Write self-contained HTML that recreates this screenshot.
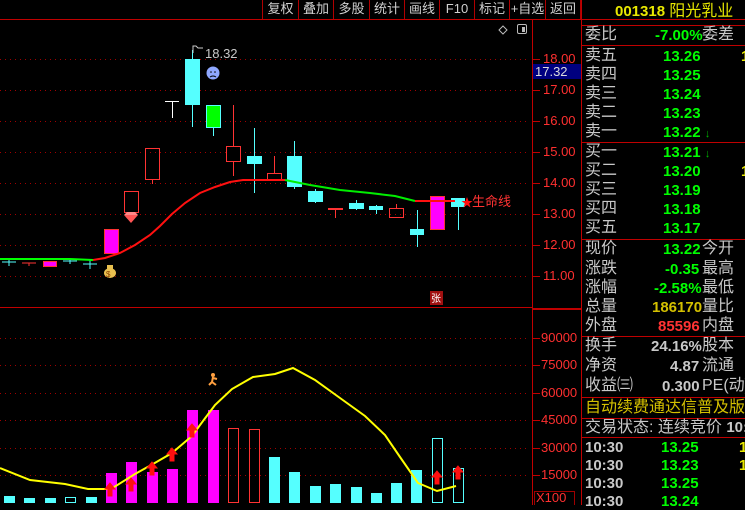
<!DOCTYPE html>
<html><head><meta charset="utf-8">
<style>
*{margin:0;padding:0;box-sizing:border-box}
body{width:745px;height:505px;background:#000;overflow:hidden;position:relative;font-family:"Liberation Sans","Noto Sans CJK SC",sans-serif}
.t{position:absolute;white-space:nowrap;font-size:16px;line-height:17px}
.n{font-size:15px;font-weight:bold}
.w{color:#c8c8c8}.g{color:#00ff00}.y{color:#e8e800}.r{color:#ff3333}.yd{color:#d4c000}
.btn{position:absolute;top:0;height:19px;border-left:1px solid #b00000;color:#d0d0d0;font-size:13px;line-height:18px;text-align:center}
.ax{position:absolute;color:#ff3030;font-size:13px;font-family:"Liberation Sans",sans-serif}
</style></head><body>
<svg width="745" height="505" style="position:absolute;left:0;top:0">
<g stroke="#a00000" stroke-width="1" stroke-dasharray="1,4">
<line x1="0" y1="59.5" x2="530" y2="59.5"/><line x1="0" y1="90.5" x2="530" y2="90.5"/><line x1="0" y1="121.5" x2="530" y2="121.5"/><line x1="0" y1="152.5" x2="530" y2="152.5"/><line x1="0" y1="183.5" x2="530" y2="183.5"/><line x1="0" y1="214.5" x2="530" y2="214.5"/><line x1="0" y1="245.5" x2="530" y2="245.5"/><line x1="0" y1="276.5" x2="530" y2="276.5"/>
<line x1="0" y1="338.5" x2="530" y2="338.5"/><line x1="0" y1="365.5" x2="530" y2="365.5"/><line x1="0" y1="393.5" x2="530" y2="393.5"/><line x1="0" y1="420.5" x2="530" y2="420.5"/><line x1="0" y1="448.5" x2="530" y2="448.5"/><line x1="0" y1="475.5" x2="530" y2="475.5"/>
</g>
<g stroke="#c00000" stroke-width="1">
<line x1="0" y1="19.5" x2="745" y2="19.5"/>
<line x1="532.5" y1="19" x2="532.5" y2="505"/>
<line x1="581.5" y1="0" x2="581.5" y2="505"/>
<line x1="0" y1="307.5" x2="533" y2="307.5"/>
<line x1="533" y1="309" x2="581" y2="309" stroke-width="2"/>
<line x1="582" y1="25.5" x2="745" y2="25.5"/><line x1="582" y1="45.5" x2="745" y2="45.5"/><line x1="582" y1="142.5" x2="745" y2="142.5"/><line x1="582" y1="239.5" x2="745" y2="239.5"/><line x1="582" y1="336.5" x2="745" y2="336.5"/><line x1="582" y1="397.5" x2="745" y2="397.5"/><line x1="582" y1="418.5" x2="745" y2="418.5"/><line x1="582" y1="437.5" x2="745" y2="437.5"/>
<line x1="533" y1="59.5" x2="540" y2="59.5"/><line x1="533" y1="90.5" x2="540" y2="90.5"/><line x1="533" y1="121.5" x2="540" y2="121.5"/><line x1="533" y1="152.5" x2="540" y2="152.5"/><line x1="533" y1="183.5" x2="540" y2="183.5"/><line x1="533" y1="214.5" x2="540" y2="214.5"/><line x1="533" y1="245.5" x2="540" y2="245.5"/><line x1="533" y1="276.5" x2="540" y2="276.5"/>
<line x1="533" y1="338.5" x2="540" y2="338.5"/><line x1="533" y1="365.5" x2="540" y2="365.5"/><line x1="533" y1="393.5" x2="540" y2="393.5"/><line x1="533" y1="420.5" x2="540" y2="420.5"/><line x1="533" y1="448.5" x2="540" y2="448.5"/><line x1="533" y1="475.5" x2="540" y2="475.5"/>
</g>
<rect x="533" y="64" width="48" height="15" fill="#000080"/>
<g stroke-width="1">
<line x1="2" y1="262" x2="16" y2="262" stroke="#55ffff"/><line x1="9" y1="259" x2="9" y2="266" stroke="#55ffff"/>
<line x1="22" y1="263" x2="36" y2="263" stroke="#ff3333"/><line x1="29" y1="263" x2="29" y2="266" stroke="#ff3333"/>
<rect x="43.5" y="261.5" width="13" height="5" fill="#ff00ff" stroke="#ff3333"/>
<line x1="63" y1="261" x2="77" y2="261" stroke="#55ffff"/><line x1="70" y1="260" x2="70" y2="264" stroke="#55ffff"/>
<line x1="83" y1="264" x2="97" y2="264" stroke="#55ffff"/><line x1="90" y1="260" x2="90" y2="269" stroke="#55ffff"/>
<rect x="104.5" y="229.5" width="14" height="24" fill="#ff00ff" stroke="#ff3333"/>
<rect x="124.5" y="191.5" width="14" height="21" fill="none" stroke="#ff3333"/>
<rect x="145.5" y="148.5" width="14" height="31" fill="none" stroke="#ff3333"/><line x1="152.5" y1="179" x2="152.5" y2="184" stroke="#ff3333"/>
<line x1="165" y1="101.5" x2="179" y2="101.5" stroke="#fff"/><line x1="172.5" y1="101" x2="172.5" y2="118" stroke="#fff"/>
<line x1="192.5" y1="50" x2="192.5" y2="127" stroke="#55ffff"/><rect x="185" y="59" width="15" height="46" fill="#55ffff"/>
<line x1="213.5" y1="105" x2="213.5" y2="136" stroke="#55ffff"/><rect x="206.5" y="105.5" width="14" height="22" fill="#00ff00" stroke="#55ffff"/>
<line x1="233.5" y1="105" x2="233.5" y2="176" stroke="#ff3333"/><rect x="226.5" y="146.5" width="14" height="15" fill="#000" stroke="#ff3333"/>
<line x1="254.5" y1="128" x2="254.5" y2="193" stroke="#55ffff"/><rect x="247" y="156" width="15" height="8" fill="#55ffff"/>
<line x1="274.5" y1="156" x2="274.5" y2="173" stroke="#ff3333"/><rect x="267.5" y="173.5" width="14" height="7" fill="none" stroke="#ff3333"/>
<line x1="294.5" y1="141" x2="294.5" y2="189" stroke="#55ffff"/><rect x="287" y="156" width="15" height="31" fill="#55ffff"/>
<line x1="315.5" y1="189" x2="315.5" y2="203" stroke="#55ffff"/><rect x="308" y="191" width="15" height="11" fill="#55ffff"/>
<line x1="328" y1="209" x2="343" y2="209" stroke="#ff3333" stroke-width="2"/><line x1="335.5" y1="208" x2="335.5" y2="218" stroke="#ff3333"/>
<line x1="356.5" y1="200" x2="356.5" y2="210" stroke="#55ffff"/><rect x="349" y="203" width="15" height="6" fill="#55ffff"/>
<line x1="376.5" y1="205" x2="376.5" y2="214" stroke="#55ffff"/><rect x="369" y="206" width="14" height="4" fill="#55ffff"/>
<line x1="396.5" y1="204" x2="396.5" y2="208" stroke="#ff3333"/><rect x="389.5" y="208.5" width="14" height="9" fill="none" stroke="#ff3333"/>
<line x1="417.5" y1="210" x2="417.5" y2="247" stroke="#55ffff"/><rect x="410" y="229" width="14" height="6" fill="#55ffff"/>
<rect x="430.5" y="196.5" width="14" height="33" fill="#ff00ff" stroke="#ff3333"/>
<line x1="458.5" y1="198" x2="458.5" y2="230" stroke="#55ffff"/><rect x="451" y="198" width="14" height="9" fill="#55ffff"/>
</g>
<polyline points="0,259 30,259 70,259 93,260" fill="none" stroke="#00ff00" stroke-width="2"/>
<polyline points="93,260 105,258 120,253 135,245 150,235 160,226 172,214 185,203 200,193 215,187 230,182 243,180 285,180" fill="none" stroke="#ff1010" stroke-width="2"/>
<polyline points="285,180 310,185 340,190 370,193 395,196 415,201" fill="none" stroke="#00ee00" stroke-width="2"/>
<polyline points="415,201 455,201" fill="none" stroke="#ff1010" stroke-width="2"/>
<g fill="#55ffff">
<rect x="4" y="496" width="11" height="7"/><rect x="24" y="498" width="11" height="5"/><rect x="45" y="498" width="11" height="5"/><rect x="86" y="497" width="11" height="6"/>
<rect x="269" y="457" width="11" height="46"/><rect x="289" y="472" width="11" height="31"/><rect x="310" y="486" width="11" height="17"/><rect x="330" y="484" width="11" height="19"/>
<rect x="351" y="487" width="11" height="16"/><rect x="371" y="493" width="11" height="10"/><rect x="391" y="483" width="11" height="20"/><rect x="411" y="470" width="11" height="33"/>
</g>
<rect x="65.5" y="497.5" width="10" height="5" fill="none" stroke="#55ffff"/>
<rect x="432.5" y="438.5" width="10" height="64" fill="none" stroke="#55ffff"/>
<rect x="453.5" y="468.5" width="10" height="34" fill="none" stroke="#55ffff"/>
<g fill="#ff00ff">
<rect x="106" y="473" width="11" height="30"/><rect x="126" y="462" width="11" height="41"/><rect x="147" y="472" width="11" height="31"/><rect x="167" y="469" width="11" height="34"/><rect x="187" y="410" width="11" height="93"/><rect x="208" y="410" width="11" height="93"/>
</g>
<rect x="228.5" y="428.5" width="10" height="74" fill="none" stroke="#ff3333"/>
<rect x="249.5" y="429.5" width="10" height="73" fill="none" stroke="#ff3333"/>
<polyline points="0,468 30,480 65,484 88,489 111,489 135,474 153,464 172,453 192,436 203,421 215,405 232,389 253,377 275,374 293,368 315,380 340,398 365,416 385,435 400,457 418,483 437,491 456,486" fill="none" stroke="#ffff00" stroke-width="2"/>
<g fill="#ff1010" stroke="#ff1010">
<path d="M110,483 l-5,6 h3 v7 h4 v-7 h3z"/><path d="M131,478 l-5,6 h3 v7 h4 v-7 h3z"/><path d="M152,462 l-5,6 h3 v7 h4 v-7 h3z"/><path d="M172,448 l-5,6 h3 v7 h4 v-7 h3z"/><path d="M192,424 l-5,6 h3 v7 h4 v-7 h3z"/><path d="M437,471 l-5,6 h3 v7 h4 v-7 h3z"/><path d="M458,466 l-5,6 h3 v7 h4 v-7 h3z"/>
</g>
<circle cx="213" cy="73" r="6.5" fill="#8fa8ff"/><circle cx="211" cy="72" r="0.8" fill="#000"/><circle cx="215" cy="72" r="0.8" fill="#000"/><path d="M210,77 q3,-2 6,0" stroke="#000" fill="none"/>
<path d="M193,53 v-7 h3 l2,2 h5" stroke="#ccc" fill="none"/>
<path d="M124,215 h14 l-7,8z" fill="#ff5555"/><path d="M124,215 l3,-3 h8 l3,3" fill="#ff8888"/>
<ellipse cx="110" cy="273" rx="6" ry="5" fill="#e8c050"/><rect x="107" y="265" width="6" height="4" fill="#e8c050"/><text x="106" y="277" font-size="8" fill="#8a4000" font-family="Liberation Sans">$</text>
<circle cx="213" cy="375" r="2" fill="#ffa040"/><path d="M213,377 l-1,5 l-3,3 M212,382 l4,3 M213,378 l4,1" stroke="#ffa040" stroke-width="2" fill="none"/>
<rect x="430" y="291" width="13" height="14" fill="#a01010"/>
<path d="M467,197 l1.5,4 h4 l-3.3,2.5 1.3,4 -3.5,-2.5 -3.5,2.5 1.3,-4 -3.3,-2.5 h4z" fill="#ff1010"/>
<path d="M503,26 l4,4 -4,4 -4,-4z" fill="none" stroke="#bbb"/>
<rect x="517.5" y="24.5" width="9" height="9" rx="1.5" fill="none" stroke="#bbb"/><rect x="522" y="27" width="3" height="5" fill="#bbb"/>
<rect x="534.5" y="491.5" width="40" height="14" fill="none" stroke="#a00000"/>
</svg>
<div class="btn" style="left:262px;width:36px">复权</div>
<div class="btn" style="left:298px;width:35px">叠加</div>
<div class="btn" style="left:333px;width:36px">多股</div>
<div class="btn" style="left:369px;width:35px">统计</div>
<div class="btn" style="left:404px;width:35px">画线</div>
<div class="btn" style="left:439px;width:35px">F10</div>
<div class="btn" style="left:474px;width:35px">标记</div>
<div class="btn" style="left:509px;width:36px">+自选</div>
<div class="btn" style="left:545px;width:36px;border-right:1px solid #b00000">返回</div>
<div class="t w" style="left:205px;top:45px;font-size:13px">18.32</div>
<div class="t r" style="left:472px;top:193px;font-size:13px">生命线</div>
<div class="t w" style="left:431px;top:291px;font-size:10px;color:#fff">张</div>
<div class="ax" style="left:543px;top:51px">18.00</div>
<div class="ax" style="left:535px;top:64px;color:#ddd">17.32</div>
<div class="ax" style="left:543px;top:82px">17.00</div>
<div class="ax" style="left:543px;top:113px">16.00</div>
<div class="ax" style="left:543px;top:144px">15.00</div>
<div class="ax" style="left:543px;top:175px">14.00</div>
<div class="ax" style="left:543px;top:206px">13.00</div>
<div class="ax" style="left:543px;top:237px">12.00</div>
<div class="ax" style="left:543px;top:268px">11.00</div>
<div class="ax" style="left:541px;top:330px">90000</div>
<div class="ax" style="left:541px;top:357px">75000</div>
<div class="ax" style="left:541px;top:385px">60000</div>
<div class="ax" style="left:541px;top:412px">45000</div>
<div class="ax" style="left:541px;top:440px">30000</div>
<div class="ax" style="left:541px;top:467px">15000</div>
<div class="ax" style="left:536px;top:490px">X100</div>
<div class="t y" style="left:615px;top:3px;font-weight:bold;font-size:15px">001318 <span style="font-weight:normal;font-size:16px">阳光乳业</span></div>
<div class="t w" style="left:585px;top:26px">委比</div><div class="t g n" style="left:655px;top:27px">-7.00%</div><div class="t w" style="left:702px;top:26px">委差</div>
<div class="t w" style="left:585px;top:47px">卖五</div><div class="t g n" style="left:663px;top:48px">13.26</div><div class="t y n" style="left:741px;top:48px">1</div>
<div class="t w" style="left:585px;top:66px">卖四</div><div class="t g n" style="left:663px;top:67px">13.25</div>
<div class="t w" style="left:585px;top:85px">卖三</div><div class="t g n" style="left:663px;top:86px">13.24</div>
<div class="t w" style="left:585px;top:104px">卖二</div><div class="t g n" style="left:663px;top:105px">13.23</div>
<div class="t w" style="left:585px;top:123px">卖一</div><div class="t g n" style="left:663px;top:124px">13.22 <span style="font-size:11px;color:#00b000">↓</span></div>
<div class="t w" style="left:585px;top:143px">买一</div><div class="t g n" style="left:663px;top:144px">13.21 <span style="font-size:11px;color:#00b000">↓</span></div>
<div class="t w" style="left:585px;top:162px">买二</div><div class="t g n" style="left:663px;top:163px">13.20</div><div class="t y n" style="left:741px;top:163px">1</div>
<div class="t w" style="left:585px;top:181px">买三</div><div class="t g n" style="left:663px;top:182px">13.19</div>
<div class="t w" style="left:585px;top:200px">买四</div><div class="t g n" style="left:663px;top:201px">13.18</div>
<div class="t w" style="left:585px;top:219px">买五</div><div class="t g n" style="left:663px;top:220px">13.17</div>
<div class="t w" style="left:585px;top:240px">现价</div><div class="t g n" style="left:663px;top:241px">13.22</div><div class="t w" style="left:702px;top:240px">今开</div>
<div class="t w" style="left:585px;top:260px">涨跌</div><div class="t g n" style="left:665px;top:261px">-0.35</div><div class="t w" style="left:702px;top:260px">最高</div>
<div class="t w" style="left:585px;top:279px">涨幅</div><div class="t g n" style="left:654px;top:280px">-2.58%</div><div class="t w" style="left:702px;top:279px">最低</div>
<div class="t w" style="left:585px;top:298px">总量</div><div class="t yd n" style="left:652px;top:299px">186170</div><div class="t w" style="left:702px;top:298px">量比</div>
<div class="t w" style="left:585px;top:317px">外盘</div><div class="t r n" style="left:658px;top:318px">85596</div><div class="t w" style="left:702px;top:317px">内盘</div>
<div class="t w" style="left:585px;top:337px">换手</div><div class="t w n" style="left:651px;top:338px">24.16%</div><div class="t w" style="left:702px;top:337px">股本</div>
<div class="t w" style="left:585px;top:357px">净资</div><div class="t w n" style="left:670px;top:358px">4.87</div><div class="t w" style="left:702px;top:357px">流通</div>
<div class="t w" style="left:585px;top:377px">收益㈢</div><div class="t w n" style="left:662px;top:378px">0.300</div><div class="t w" style="left:702px;top:377px">PE(动)</div>
<div class="t yd" style="left:585px;top:399px">自动续费通达信普及版</div>
<div class="t w" style="left:585px;top:419px">交易状态: 连续竞价 <b style="font-size:15px">10:</b></div>
<div class="t w n" style="left:585px;top:439px">10:30</div><div class="t g n" style="left:661px;top:439px">13.25</div><div class="t y n" style="left:739px;top:439px">1</div>
<div class="t w n" style="left:585px;top:457px">10:30</div><div class="t g n" style="left:661px;top:457px">13.23</div><div class="t y n" style="left:739px;top:457px">1</div>
<div class="t w n" style="left:585px;top:475px">10:30</div><div class="t g n" style="left:661px;top:475px">13.25</div>
<div class="t w n" style="left:585px;top:493px">10:30</div><div class="t g n" style="left:661px;top:493px">13.24</div>
</body></html>
